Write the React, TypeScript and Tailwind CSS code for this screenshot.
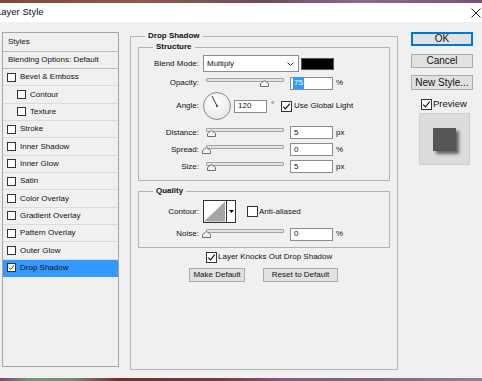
import React from 'react'

function Check({ checked = false, size = 11 }: { checked?: boolean; size?: number }) {
  return (
    <span
      className={`flex shrink-0 items-center justify-center border border-[#333] bg-white ${size === 9 ? 'h-[9px] w-[9px]' : 'h-[11px] w-[11px]'}`}
    >
      {checked && (
        <svg width={size - 2} height={size - 2} viewBox="0 0 9 9">
          <path d="M1.2 4.6 L3.4 6.9 L7.8 1.6" fill="none" stroke="#111" strokeWidth="1.1" />
        </svg>
      )}
    </span>
  )
}

function Slider({ pos }: { pos: number }) {
  return (
    <div className="relative h-[16px] w-[87px] shrink-0">
      <div className="absolute left-[3px] top-[3px] h-[4px] w-[78px] rounded-[1px] border border-[#a3a3a3] bg-[#e4e4e4]" />
      <svg className="absolute top-[5px]" style={{ left: 3 + pos * 78 - 4.5 }} width="9" height="7" viewBox="0 0 9 7">
        <path d="M4.5 0.5 L8.5 3.5 L8.5 6.5 L0.5 6.5 L0.5 3.5 Z" fill="#f6f6f6" stroke="#6e6e6e" />
      </svg>
    </div>
  )
}

function Field({ value, w = 'w-[43px]', selected = false }: { value: string; w?: string; selected?: boolean }) {
  return (
    <div className={`flex h-[13px] shrink-0 items-center border border-[#8c8c8c] bg-white pl-[2px] ${w}`}>
      <span className={selected ? 'bg-[#3399ff] px-[1px] text-white' : 'pl-[1px]'}>{value}</span>
    </div>
  )
}

function Label({ children }: { children: React.ReactNode }) {
  return <span className="w-[64px] shrink-0 pr-[4px] text-right">{children}</span>
}

function Group({ title, className, children }: { title: string; className?: string; children: React.ReactNode }) {
  return (
    <div className={`relative border border-[#b3b3b3] ${className ?? ''}`}>
      <span className="absolute left-[14px] top-[-6px] bg-[#f0f0f0] px-[3px] font-bold leading-[10px]">{title}</span>
      {children}
    </div>
  )
}

function Dial() {
  return (
    <div className="h-[28px] w-[28px] shrink-0 rounded-full border border-[#8a8a8a] bg-[radial-gradient(circle_at_40%_35%,#ffffff,#e2e2e2)]">
      <svg width="26" height="26" viewBox="0 0 26 26">
        <line x1="13" y1="13" x2="8" y2="3" stroke="#333" strokeWidth="1" />
        <circle cx="13" cy="13" r="1" fill="#333" />
      </svg>
    </div>
  )
}

function Contour() {
  return (
    <div className="flex h-[23px] w-[33px] shrink-0 border border-[#333] bg-white">
      <svg width="23" height="21" viewBox="0 0 23 21" className="border-r border-[#333]">
        <path d="M0 21 L22 0 L22 21 Z" fill="#a6a6a6" />
      </svg>
      <div className="flex flex-1 items-center justify-center">
        <svg width="5" height="3" viewBox="0 0 5 3">
          <path d="M0 0 L5 0 L2.5 3 Z" fill="#111" />
        </svg>
      </div>
    </div>
  )
}

const items: { name: string; indent?: boolean; checked?: boolean }[] = [
  { name: 'Bevel & Emboss' },
  { name: 'Contour', indent: true },
  { name: 'Texture', indent: true },
  { name: 'Stroke' },
  { name: 'Inner Shadow' },
  { name: 'Inner Glow' },
  { name: 'Satin' },
  { name: 'Color Overlay' },
  { name: 'Gradient Overlay' },
  { name: 'Pattern Overlay' },
  { name: 'Outer Glow' },
  { name: 'Drop Shadow', checked: true },
]

export default function App() {
  return (
    <div className="h-[381px] w-[482px] overflow-hidden bg-[#f0f0f0] font-['Liberation_Sans',Arial,sans-serif] text-[8px] text-[#111]">
      <div className="h-[3px] bg-[linear-gradient(90deg,#7a4a3a,#8b5a4a_30%,#6f4a5c_55%,#8e6a8a_75%,#7a5070)]" />
      <div className="flex h-[19px] items-center justify-between bg-white">
        <span className="ml-[-4px] text-[9.5px] text-[#111]">Layer Style</span>
        <svg width="10" height="10" viewBox="0 0 10 10" className="mr-[1px]">
          <path d="M0.5 0.5 L9.5 9.5 M9.5 0.5 L0.5 9.5" stroke="#222" strokeWidth="1" />
        </svg>
      </div>

      <div className="flex h-[356px] items-start">
        {/* styles list */}
        <div className="ml-[2px] mt-[10px] h-[335px] w-[117px] shrink-0 border border-[#a5a5a5]">
          <div className="flex h-[19px] items-center border-b border-[#bdbdbd] pl-[5px]">Styles</div>
          <div className="flex h-[17px] items-center border-b border-[#bdbdbd] pl-[5px]">Blending Options: Default</div>
          {items.map((it) => (
            <div
              key={it.name}
              className={`flex h-[17.35px] items-center gap-[4px] border-b ${it.checked ? 'border-[#3399ff] bg-[#3399ff]' : 'border-[#dcdcdc]'} ${it.indent ? 'pl-[14px]' : 'pl-[4px]'}`}
            >
              <Check checked={it.checked} size={9} />
              <span>{it.name}</span>
            </div>
          ))}
        </div>

        {/* drop shadow settings */}
        <Group title="Drop Shadow" className="ml-[11px] mt-[14px] h-[334px] w-[268px] shrink-0 px-[7px] pt-[10px]">
          <Group title="Structure" className="pb-[5px] pt-[7px]">
            <div className="flex h-[17px] items-center">
              <Label>Blend Mode:</Label>
              <div className="flex h-[17px] w-[96px] items-center justify-between border border-[#8c8c8c] bg-white pl-[3px] pr-[4px]">
                <span>Multiply</span>
                <svg width="7" height="4" viewBox="0 0 7 4">
                  <path d="M0.5 0.5 L3.5 3.5 L6.5 0.5" fill="none" stroke="#333" />
                </svg>
              </div>
              <div className="ml-[2px] h-[12px] w-[33px] border border-[#555] bg-black" />
            </div>
            <div className="mt-[3px] flex h-[16px] items-center">
              <Label>Opacity:</Label>
              <Slider pos={0.75} />
              <Field value="75" selected />
              <span className="ml-[3px]">%</span>
            </div>
            <div className="mt-[1px] flex h-[28px] items-center">
              <Label>Angle:</Label>
              <Dial />
              <div className="ml-[3px]">
                <Field value="120" w="w-[33px]" />
              </div>
              <span className="w-[14px] self-start pl-[4px] pt-[7px]">°</span>
              <Check checked />
              <span className="ml-[2px]">Use Global Light</span>
            </div>
            {[
              ['Distance:', 0.075, '5', 'px'],
              ['Spread:', 0, '0', '%'],
              ['Size:', 0.075, '5', 'px'],
            ].map(([label, pos, val, unit], i) => (
              <div key={label as string} className={`flex h-[17px] items-center ${i === 0 ? 'mt-[4px]' : ''}`}>
                <Label>{label}</Label>
                <Slider pos={pos as number} />
                <Field value={val as string} />
                <span className="ml-[3px]">{unit}</span>
              </div>
            ))}
          </Group>

          <Group title="Quality" className="mt-[10px] pb-[5px] pt-[8px]">
            <div className="flex h-[23px] items-center">
              <Label>Contour:</Label>
              <Contour />
              <span className="ml-[11px]">
                <Check />
              </span>
              <span className="ml-[1px]">Anti-aliased</span>
            </div>
            <div className="mt-[3px] flex h-[16px] items-center">
              <Label>Noise:</Label>
              <Slider pos={0} />
              <Field value="0" />
              <span className="ml-[3px]">%</span>
            </div>
          </Group>

          <div className="mt-[2px] flex h-[14px] items-center pl-[68px]">
            <Check checked />
            <span className="ml-[1px]">Layer Knocks Out Drop Shadow</span>
          </div>
          <div className="mt-[4px] flex gap-[18px] pl-[51px]">
            <button className="h-[14px] w-[56px] border border-[#adadad] bg-[#e1e1e1] leading-[12px]">Make Default</button>
            <button className="h-[14px] w-[75px] border border-[#adadad] bg-[#e1e1e1] leading-[12px]">Reset to Default</button>
          </div>
        </Group>

        {/* buttons */}
        <div className="ml-[13px] mt-[10px] flex w-[62px] shrink-0 flex-col text-[10px]">
          <button className="h-[14px] border border-[#0078d7] bg-[#e1e1e1] leading-[12px] shadow-[inset_0_0_0_1px_#0078d7]">OK</button>
          <button className="mt-[8px] h-[14px] border border-[#adadad] bg-[#e1e1e1] leading-[12px]">Cancel</button>
          <button className="mt-[7px] h-[15px] border border-[#adadad] bg-[#e1e1e1] leading-[13px]">New Style...</button>
          <div className="ml-[10px] mt-[9px] flex h-[11px] items-center text-[9.5px]">
            <Check checked />
            <span className="ml-[1px]">Preview</span>
          </div>
          <div className="ml-[8px] mt-[3px] flex h-[52px] w-[51px] items-center justify-center border border-[#cfcfcf] bg-[#dcdcdc]">
            <div className="h-[23px] w-[23px] bg-[#555] shadow-[3px_3px_3px_rgba(0,0,0,0.55)]" />
          </div>
        </div>
      </div>

      <div className="h-[3px] bg-[linear-gradient(90deg,#7a4a6a,#6e9a78_6%,#7a8a70_15%,#6a3030_25%,#7a3a40_45%,#8a5a80_60%,#7a6a8a_80%,#9a7aa0)]" />
    </div>
  )
}
